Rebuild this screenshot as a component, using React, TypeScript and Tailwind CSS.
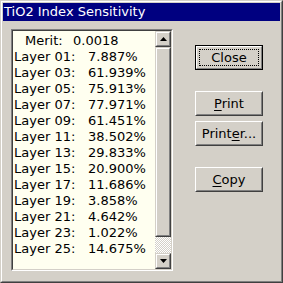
const rows: [string, string][] = [
  ["01", "7.887%"],
  ["03", "61.939%"],
  ["05", "75.913%"],
  ["07", "77.971%"],
  ["09", "61.451%"],
  ["11", "38.502%"],
  ["13", "29.833%"],
  ["15", "20.900%"],
  ["17", "11.686%"],
  ["19", "3.858%"],
  ["21", "4.642%"],
  ["23", "1.022%"],
  ["25", "14.675%"],
]

const Raised = ({ children, className }: { children: React.ReactNode; className?: string }) => (
  <div className={`border border-t-white border-l-white border-r-[#404040] border-b-[#404040] ${className ?? ""}`}>
    <div className="h-full border border-t-[#d4d0c8] border-l-[#d4d0c8] border-r-[#808080] border-b-[#808080] flex items-center justify-center">
      {children}
    </div>
  </div>
)

const ScrollBtn = ({ up }: { up?: boolean }) => (
  <div className="w-[16px] h-[16px] border border-t-[#d4d0c8] border-l-[#d4d0c8] border-r-[#404040] border-b-[#404040]">
    <div className="h-full border border-t-white border-l-white border-r-[#808080] border-b-[#808080] flex items-center justify-center">
      <svg width="7" height="4" viewBox="0 0 7 4">
        {up ? <path d="M3.5 0 L7 4 L0 4 Z" fill="#000" /> : <path d="M0 0 L7 0 L3.5 4 Z" fill="#000" />}
      </svg>
    </div>
  </div>
)

export default function App() {
  return (
    <div className="w-[283px] h-[283px] bg-[#d4d0c8] border border-t-[#d4d0c8] border-l-[#d4d0c8] border-r-[#404040] border-b-[#404040] font-['DejaVu_Sans',sans-serif] text-[13px] text-black">
      <div className="h-full border border-t-white border-l-white border-r-[#808080] border-b-[#808080] p-px flex flex-col">
        <div className="h-[18px] bg-[#000080] text-white pl-[1px] leading-[18px]">TiO2 Index Sensitivity</div>

        <div className="flex pl-[8px] pt-[8px]">
          <div className="w-[162px] h-[242px] border border-t-[#808080] border-l-[#808080] border-r-white border-b-white">
            <div className="h-full border border-t-[#404040] border-l-[#404040] border-r-[#d4d0c8] border-b-[#d4d0c8] flex">
              <div className="flex-1 bg-[#fffff0] pl-px pt-[2px]">
                <div className="h-[16px] leading-[16px] flex pl-[11px]">
                  <span className="w-[48px]">Merit:</span>
                  <span>0.0018</span>
                </div>
                {rows.map(([n, v]) => (
                  <div key={n} className="h-[16px] leading-[16px] flex">
                    <span className="w-[74px]">Layer {n}:</span>
                    <span>{v}</span>
                  </div>
                ))}
              </div>
              <div className="w-[16px] flex flex-col">
                <ScrollBtn up />
                <div className="h-[190px] border border-t-[#d4d0c8] border-l-[#d4d0c8] border-r-[#404040] border-b-[#404040]">
                  <div className="h-full border border-t-white border-l-white border-r-[#808080] border-b-[#808080]" />
                </div>
                <div className="flex-1 bg-[repeating-conic-gradient(#d4d0c8_0_25%,#ffffff_0_50%)] bg-[length:2px_2px]" />
                <ScrollBtn />
              </div>
            </div>
          </div>

          <div className="ml-[22px] mt-[16px] flex flex-col">
            <div className="w-[68px] h-[25px] border border-black">
              <div className="h-full border border-t-white border-l-white border-r-[#808080] border-b-[#808080] p-[2px]">
                <div className="h-full border border-dotted border-black flex items-center justify-center">Close</div>
              </div>
            </div>
            <Raised className="w-[68px] h-[25px] mt-[21px]">
              <span><u className="underline-offset-2">P</u>rint</span>
            </Raised>
            <Raised className="w-[68px] h-[25px] mt-[5px]">
              <span>Print<u className="underline-offset-2">e</u>r...</span>
            </Raised>
            <Raised className="w-[68px] h-[25px] mt-[21px]">
              <span><u className="underline-offset-2">C</u>opy</span>
            </Raised>
          </div>
        </div>
      </div>
    </div>
  )
}
